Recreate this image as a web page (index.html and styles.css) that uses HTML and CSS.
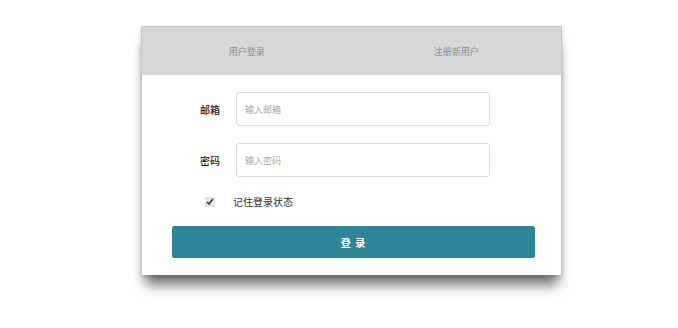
FILE: index.html
```html
<!DOCTYPE html>
<html lang="zh-CN">
<head>
  <meta charset="UTF-8">
  <title>登录</title>
  <link rel="stylesheet" href="styles.css">
</head>
<body>
  <div class="card">
    <div class="tabs">
      <div class="tab">用户登录</div>
      <div class="tab">注册新用户</div>
    </div>
    <form class="login-form">
      <div class="row">
        <label for="email">邮箱</label>
        <input id="email" type="text" placeholder="输入邮箱">
      </div>
      <div class="row">
        <label for="pwd">密码</label>
        <input id="pwd" type="password" placeholder="输入密码">
      </div>
      <div class="remember">
        <input id="remember" type="checkbox" checked>
        <label for="remember">记住登录状态</label>
      </div>
      <button type="button" class="submit">登 录</button>
    </form>
  </div>
</body>
</html>
```

FILE: styles.css
```css
body {
  margin: 0;
  padding-bottom: 30px;
  background: #fff;
  font-family: "Noto Sans CJK SC", "Liberation Sans", sans-serif;
  color: #333;
}

.card {
  width: 419px;
  margin: 26px 0 0 141px;
  background: #fff;
  border: 1px solid #c4c8c8;
  border-bottom: none;
  box-shadow: 0 14px 12px -4px rgba(0, 0, 0, 0.55), 0 2px 4px rgba(0, 0, 0, 0.15);
}

.tabs {
  display: flex;
  height: 48px;
  background: #d3d8d8;
}

.tab {
  flex: 1;
  display: flex;
  align-items: center;
  justify-content: center;
  font-size: 9px;
  color: #8a8f8f;
}

.login-form {
  padding: 17px 25px 17px 30px;
}

.row {
  display: flex;
  align-items: center;
  margin-bottom: 17px;
}

.row label {
  width: 48px;
  padding-right: 16px;
  text-align: right;
  font-size: 10px;
  font-weight: 500;
  color: #222;
}

.row input {
  width: 254px;
  height: 34px;
  box-sizing: border-box;
  border: 1px solid #dcdcdc;
  border-radius: 3px;
  padding: 0 8px;
  font-family: inherit;
  font-size: 9px;
  color: #333;
}

.row input::placeholder {
  color: #aaa;
}

.remember {
  display: flex;
  align-items: center;
  height: 15px;
  margin: 0 0 17px 33px;
}

.remember input {
  width: 10px;
  height: 10px;
  margin: 0 18px 0 0;
  accent-color: #e4e4e4;
}

.remember label {
  font-size: 10px;
  color: #333;
}

.submit {
  display: block;
  width: 363px;
  height: 32px;
  border: none;
  border-radius: 2px;
  background: #2e8799;
  color: #fff;
  font-family: inherit;
  font-size: 10px;
  font-weight: bold;
  letter-spacing: 1px;
}
```
